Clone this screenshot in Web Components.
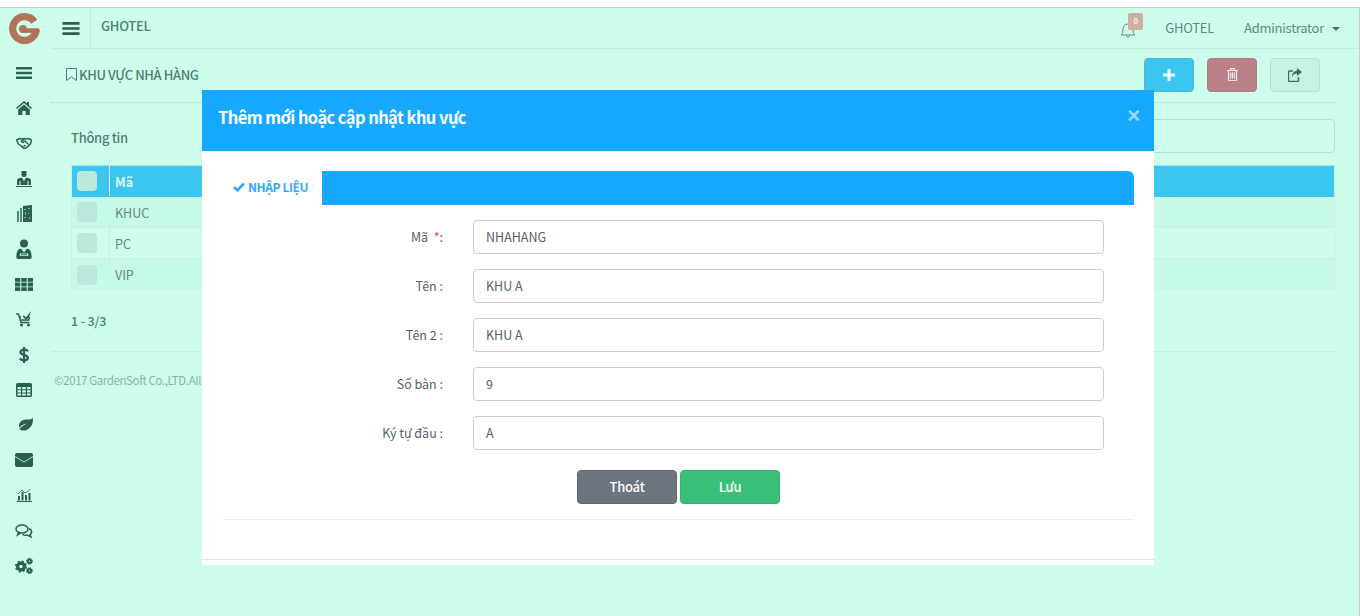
<!DOCTYPE html>
<html lang="vi"><head><meta charset="utf-8"><title>GHOTEL</title>
<style>
html,body{margin:0;height:616px;overflow:hidden;background:#fff;font-family:"Noto Sans CJK SC","Noto Sans",sans-serif;}
</style></head><body>
<g-app></g-app>
<script>
const C='#2c5f50';
const ICONS={
bars:`<svg width="16" height="14" viewBox="0 0 16 14"><path fill="${C}" d="M0 1h16v2.400H0zM0 5.800h16v2.400H0zM0 10.600h16V13H0z"/></svg>`,
home:`<svg width="16" height="14" viewBox="0 0 16 14"><path fill="${C}" d="M8 0l3 2.600V1h2v3.300L16 7l-1 1-7-6-7 6-1-1zM2.200 8.400L8 3.400l5.800 5V14H9.600v-4H6.400v4H2.200z"/></svg>`,
shake:`<svg width="16" height="12" viewBox="0 0 16 12" fill="none" stroke="${C}" stroke-width="1.500"><path d="M.5 3l3-1.500 3 .5L8 1.500l2 .5 2.500-.5L15.500 3l-1 4-4.500 4-2 .5-4-3.500-1.500-1z"/><path d="M8 2L5.500 4.500 7 5.500 9 4l3.500 3.500M6 9l1.500 1.500M8 8l1.500 1.500"/></svg>`,
staff:`<svg width="16" height="18" viewBox="0 0 16 18"><path fill="${C}" d="M5.500 1h5v2.200h-5z"/><circle cx="8" cy="4.500" r="2.500" fill="${C}"/><path fill="${C}" d="M1 15v-4.500C1 8.500 3 8 5.500 7.500L8 10l2.500-2.500C13 8 15 8.500 15 10.500V15zM0 16h16v1H0z"/><path fill="#cdfeec" d="M7 9.500h2v1H7zM3.500 11h1v4h-1zM11.500 11h1v4h-1z"/></svg>`,
build:`<svg width="15" height="17" viewBox="0 0 15 17"><path fill="${C}" d="M6 1l9-1v17H6z"/><path fill="${C}" d="M0 6h2v11H0zM3 3h2v14H3z" opacity=".75"/><path fill="#cdfeec" d="M7 4h2v1H7zM11 3h2v1h-2zM8 7h1v3H8zM11 8h1v1h-1zM7 12h2v1H7zM12 12h1v2h-1z" opacity=".55"/></svg>`,
user:`<svg width="16" height="21" viewBox="0 0 16 21"><circle cx="8" cy="4.500" r="4" fill="${C}"/><path fill="${C}" d="M5 9.500L3 10.300C1.500 11 .5 13 .3 19l1.700 1h12l1.700-1c-.2-6-1.200-8-2.700-8.700L11 9.500l-3 4z"/><path fill="#cdfeec" d="M3.800 14.500h8.400v2.500H3.800z"/><path fill="${C}" d="M4.700 15.300h6.600v1H4.700z"/></svg>`,
th:`<svg width="18" height="13" viewBox="0 0 18 13"><path fill="${C}" d="M0 0h5.300v3.800H0zM6.300 0h5.400v3.800H6.300zM12.700 0H18v3.800h-5.300zM0 4.600h5.300v3.800H0zM6.300 4.600h5.400v3.800H6.300zM12.700 4.600H18v3.800h-5.300zM0 9.200h5.300V13H0zM6.300 9.200h5.400V13H6.300zM12.700 9.200H18V13h-5.300z"/></svg>`,
cart:`<svg width="16" height="16" viewBox="0 0 16 16"><path fill="none" stroke="${C}" stroke-width="1.500" d="M0 3h2.500L5 11.500h8.500M3.300 6h1.700M13.500 6l-.8 3H5"/><circle cx="5.500" cy="14" r="1.500" fill="${C}"/><circle cx="12.500" cy="14" r="1.500" fill="${C}"/><path fill="${C}" d="M7.500 4L10 6.500 15 0l-2 6.500-3 2-3-2.500z"/></svg>`,
dollar:`<svg width="10" height="16" viewBox="0 0 10 16"><path fill="none" stroke="${C}" stroke-width="2.300" d="M9 4.200C8 3 6.500 2.700 5 2.700 3 2.700 1.400 3.600 1.400 5.200 1.400 8.300 8.800 7.300 8.800 10.700c0 1.700-1.700 2.600-3.800 2.600-1.700 0-3.300-.6-4.200-1.900"/><path fill="${C}" d="M3.900 0h2.200v16H3.900z"/></svg>`,
table:`<svg width="16" height="14" viewBox="0 0 16 14"><path fill="${C}" fill-rule="evenodd" d="M1.500 0h13A1.500 1.500 0 0 1 16 1.500v11a1.500 1.500 0 0 1-1.500 1.500h-13A1.500 1.500 0 0 1 0 12.500v-11A1.500 1.500 0 0 1 1.500 0zM1.500 4v2.200h3.500V4zM6.200 4v2.200h3.600V4zM11 4v2.200h3.500V4zM1.500 7.300v2.200h3.500V7.300zM6.200 7.300v2.200h3.600V7.300zM11 7.300v2.200h3.500V7.300zM1.500 10.600v2h3.500v-2zM6.200 10.600v2h3.600v-2zM11 10.600v2h3.500v-2z"/></svg>`,
leaf:`<svg width="17" height="13" viewBox="0 0 17 13"><path fill="${C}" d="M17 0c-1 1.500-3 1.500-6 1.500C6 1.500 3 4 3 8c0 .7.1 1.200.3 1.700C5 7.500 8 6 11 5.500 8 7 5 9 1.500 12.700l-.5-.2c-.3.3 0 .6.3.5L3.500 11C5 12.500 7 13 9.500 12.300 15 10.800 17.500 5 17 0z"/></svg>`,
mail:`<svg width="18" height="14" viewBox="0 0 18 14"><rect width="18" height="14" rx="2" fill="${C}"/><path d="M0 3.500l9 5.500 9-5.500" fill="none" stroke="#cdfeec" stroke-width=".8"/></svg>`,
chart:`<svg width="15" height="13" viewBox="0 0 15 13"><path fill="${C}" d="M0 12h15v1H0zM1 7h2v4.500H1zM4.500 3h2v8.500h-2zM8 6h2v5.500H8zM11.500 4h2v7.500h-2z"/><path fill="none" stroke="${C}" stroke-width=".8" d="M1 5l4-4 3 3 5.500-3.500"/></svg>`,
chat:`<svg width="18" height="14" viewBox="0 0 18 14" fill="none" stroke="${C}" stroke-width="1.500"><ellipse cx="7" cy="5" rx="6" ry="4"/><path d="M3.500 8.300L2.500 11l3-1.900"/><path d="M14 4.500c2 1 3 2.500 2.500 4-.3 1-1 1.700-1.500 2l1 2.500-3.500-1.800c-2 .3-4 0-5-1"/></svg>`,
cogs:`<svg width="18" height="16" viewBox="0 0 18 16" fill="none" stroke="${C}"><circle cx="6" cy="8.500" r="3.400" stroke-width="3.200"/><circle cx="6" cy="8.500" r="5.300" stroke-width="1.400" stroke-dasharray="2.200 1.960"/><circle cx="14.500" cy="3.300" r="1.700" stroke-width="2"/><circle cx="14.500" cy="3.300" r="3" stroke-width="1" stroke-dasharray="1.300 1.056"/><circle cx="14.500" cy="12.700" r="1.700" stroke-width="2"/><circle cx="14.500" cy="12.700" r="3" stroke-width="1" stroke-dasharray="1.300 1.056"/></svg>`
};
function def(name,html){customElements.define(name,class extends HTMLElement{constructor(){super();this.attachShadow({mode:'open'}).innerHTML=html(this)}})}

def('g-rail',()=>`<style>
:host{display:block;width:51px;flex:none}
.logo{height:41px;display:flex;align-items:center;justify-content:center;margin-right:3px}
.list{display:flex;flex-direction:column;margin-top:6.500px}
.i{height:35.200px;display:flex;align-items:center;justify-content:center;margin-right:3px}
</style>
<div class="logo"><svg width="31" height="31" viewBox="0 0 30 30"><g fill="none" stroke="#b27359"><path stroke-width="7" d="M24.500 8.500A11.500 11.500 0 1 0 26.500 16"/><path stroke-width="4.500" d="M29 17H14"/></g><circle cx="13.500" cy="15.500" r="3.800" fill="#b27359"/></svg></div>
<div class="list">${['bars','home','shake','staff','build','user','th','cart','dollar','table','leaf','mail','chart','chat','cogs'].map(k=>`<div class="i">${ICONS[k]}</div>`).join('')}</div>`);

def('g-topbar',()=>`<style>
:host{display:flex;height:40px;border-bottom:1px solid #bfeedd;align-items:stretch;font-size:13px;letter-spacing:-.25px;color:#5b897e}
.b{width:39px;display:flex;align-items:center;justify-content:center;border-right:1px solid #bfeedd}
.t{padding-left:10px;line-height:35px;font-weight:500;color:#4e7e72;letter-spacing:-.3px}
.sp{flex:1}
.r{display:flex;align-items:center;position:relative;padding-bottom:1px}
.bell{position:relative;width:16px;height:18px;margin:5px 29px 0 0}
.bd{position:absolute;left:8px;top:-8px;width:15px;height:17px;border-radius:2px;background:#cfae9b;color:#e9f5ee;font-size:8px;font-weight:700;text-align:center;line-height:16px;letter-spacing:0}
.g{margin-right:30px}
.car{width:0;height:0;border:4px solid transparent;border-top-color:#4e6f66;border-bottom:0;margin:2px 0 0 8px}
.a{margin-right:19px;display:flex;align-items:center}
</style>
<div class="b">${ICONS.bars.replace('width="16" height="14"','width="18" height="15"')}</div>
<div class="t">GHOTEL</div><div class="sp"></div>
<div class="r"><div class="bell"><svg width="16" height="18" viewBox="0 0 16 18" fill="none" stroke="#5f8a7f" stroke-width="1"><path d="M1 14c1.500-1.500 2-3 2-6 0-3 2-5 5-5s5 2 5 5c0 3 .5 4.500 2 6zM6.500 14.500c0 2 3 2 3 0"/></svg><span class="bd">0</span></div>
<span class="g">GHOTEL</span><span class="a">Administrator<span class="car"></span></span></div>`);

def('g-toolbar',()=>`<style>
:host{display:flex;height:54px;box-sizing:border-box;border-bottom:1px dotted #a9d4c5;align-items:center;margin-right:24px;justify-content:space-between;padding:0 15px 2px}
.h{display:flex;align-items:center;gap:2px;font-size:13px;letter-spacing:-.4px;color:#4e7e72;font-weight:500}
.bs{display:flex;gap:13px}
.btn{width:50px;height:34px;box-sizing:border-box;border-radius:4px;display:flex;align-items:center;justify-content:center;border:1px solid}
.p{background:#3bc6ef;border-color:#52b4d4}.d{background:#bb8189;border-color:#b07a82}.e{background:#c5f3e4;border-color:#b5e0d2}
</style>
<div class="h"><svg width="11" height="13" viewBox="0 0 11 13" fill="none" stroke="#4e7e72"><path d="M.5.500h10v12l-5-3.500-5 3.500z"/></svg>KHU VỰC NHÀ HÀNG</div>
<div class="bs">
<div class="btn p"><svg width="12" height="12" viewBox="0 0 12 12"><path fill="#eafcff" d="M4.500 0h3v4.500H12v3H7.500V12h-3V7.500H0v-3h4.500z"/></svg></div>
<div class="btn d"><svg width="11" height="13" viewBox="0 0 11 13" fill="none" stroke="#f4e7e6" stroke-width="1.200"><path d="M0 2.500h11M3.500 2.500V.7h4v1.800M1.500 2.500v9.500a.6.600 0 0 0 .6.500h6.800a.6.600 0 0 0 .6-.5V2.500M3.700 4.500v6M5.500 4.500v6M7.300 4.500v6"/></svg></div>
<div class="btn e"><svg width="14" height="14" viewBox="0 0 14 14"><path fill="none" stroke="#3d6e62" stroke-width="1.400" d="M5 3H1.500a1 1 0 0 0-1 1v8.500a1 1 0 0 0 1 1h8a1 1 0 0 0 1-1V9"/><path fill="#3d6e62" d="M9 0l5 4-5 4V5.500C6.500 5.500 5 6.500 4 9c0-4 2-6 5-6.500z"/></svg></div>
</div>`);

def('g-table',()=>{
const rows=[['KHUC','#c7f9e8'],['PC','#cdfeec'],['VIP','#c7f9e8']];
const box=`<span class="cb"></span>`;
return `<style>
:host{display:block;margin:0 24px 0 20px;font-size:12.500px;color:#5d8c80}
.tr{display:flex;height:31px;align-items:center;box-sizing:border-box;border-bottom:1px solid #c3f1e2;border-left:1px solid #c3f1e2;border-right:1px solid #c3f1e2}
.c1{width:38px;height:100%;display:flex;align-items:center;padding-left:5px;box-sizing:border-box;border-right:1px solid #c3f1e2;flex:none}
.c2{padding-left:5px}
.cb{display:block;width:20px;height:20px;border-radius:4px;background:#b9e8dc}
.hd{background:#3bc6ef;background-clip:padding-box;color:#dff6f6;font-weight:700;height:32px;border-top:1px solid #a8e2e6;border-bottom:0;padding-bottom:1px}
.hd .c1{border-right-color:#e6fbf8}
.tr:last-child{border-bottom:0}
</style>
<div class="tr hd"><div class="c1">${box}</div><div class="c2">Mã</div></div>
${rows.map(r=>`<div class="tr" style="background:${r[1]}"><div class="c1">${box}</div><div class="c2">${r[0]}</div></div>`).join('')}`});

def('g-field',el=>`<style>
:host{display:flex;align-items:center;height:34px;margin-bottom:15px;font-size:12.500px;color:#555f68}
.l{width:271px;text-align:right;padding:0 30px 2px 0;box-sizing:border-box;flex:none;white-space:pre}
.s{color:#f33}
.v{width:631px;height:34px;box-sizing:border-box;border:1px solid #ccc;border-radius:4px;padding:0 12px;line-height:31px;color:#555f68}
</style>
<div class="l">${el.getAttribute('label')}${el.hasAttribute('req')?'&nbsp; <span class="s">*</span>':' '}:</div><div class="v"><slot></slot></div>`);

def('g-modal',()=>`<style>
:host{display:block;position:absolute;left:202px;top:90px;width:952px;height:475px;background:#fff}
.head{height:61px;background:#17a9ff;color:#fff;font-size:16.500px;letter-spacing:-.58px;font-weight:700;display:flex;align-items:center;justify-content:space-between;padding:0 14px 8px 16px;box-sizing:border-box}
.x{color:#9fd9fb;font:700 22px/1 "Liberation Sans",sans-serif;margin:-1px 0 0;letter-spacing:0}
.tabs{display:flex;height:34px;margin:20px 20px 15px}
.tab{width:100px;display:flex;align-items:center;color:#34a9f9;font-size:12px;letter-spacing:-.4px;font-weight:700;gap:3px;padding:0 0 3px 11px;box-sizing:border-box}
.fill{flex:1;background:#17a9ff;border-radius:0 6px 0 0}
.acts{display:flex;justify-content:center;gap:3px;margin-top:20px;padding-left:1px}
.btn{width:100px;height:34px;box-sizing:border-box;border-radius:4px;color:#fff;font-size:13px;letter-spacing:-.2px;font-weight:500;display:flex;align-items:center;justify-content:center;padding-bottom:2px}
.q{background:#6c757d;border:1px solid #5e6870}.s{background:#3abf7a;border:1px solid #34b272}
.hr{height:1px;background:#eee;margin:15px 20px 0}
.ft{height:39px;border-bottom:1px solid #e5e5e5}
</style>
<div class="head"><span>Thêm mới hoặc cập nhật khu vực</span><span class="x">×</span></div>
<div class="tabs"><div class="tab"><svg width="12" height="10" viewBox="0 0 12 10"><path fill="none" stroke="#34a9f9" stroke-width="2.600" d="M1 5l3.400 3.400L11 1.500"/></svg>NHẬP LIỆU</div><div class="fill"></div></div>
<slot></slot>
<div class="acts"><div class="btn q">Thoát</div><div class="btn s">Lưu</div></div>
<div class="hr"></div><div class="ft"></div>`);

def('g-app',()=>`<style>
:host{display:block;height:616px;position:relative}
.strip{height:7px;background:#fff}
.frame{height:608px;background:#cdfeec;border-top:1px solid #c9cfcc;border-right:1px solid #c9cfcc;display:flex}
main{flex:1;min-width:0}
.box{padding:16px 24px 0 20px}
.info{display:flex;align-items:center;justify-content:space-between;height:34px;font-size:13px;letter-spacing:-.3px;color:#4e7e72;font-weight:500;margin-bottom:12px}
.info span{padding-top:2px}
.inp{width:400px;height:34px;box-sizing:border-box;border:1px solid #b6e0d2;border-radius:4px}
.pg{font-size:12.500px;letter-spacing:-.15px;color:#4e7e72;font-weight:500;margin:21px 20px 0;height:40px}
.hr{height:1px;background:#c1f0e1;margin:0 24px 0 0;border-radius:3px}
.foot{font-size:11.500px;letter-spacing:-.4px;color:#86b5a8;margin:20px 0 0 3px;white-space:nowrap}
</style>
<div class="strip"></div>
<div class="frame"><g-rail></g-rail><main><g-topbar></g-topbar><g-toolbar></g-toolbar>
<div class="box"><div class="info"><span>Thông tin</span><div class="inp"></div></div></div>
<g-table></g-table>
<div class="pg">1 - 3/3</div><div class="hr"></div>
<div class="foot">©2017 GardenSoft Co.,LTD.All</div></main></div>
<g-modal>
<g-field label="Mã" req>NHAHANG</g-field>
<g-field label="Tên">KHU A</g-field>
<g-field label="Tên 2">KHU A</g-field>
<g-field label="Số bàn">9</g-field>
<g-field label="Ký tự đầu">A</g-field>
</g-modal>`);
</script></body></html>
